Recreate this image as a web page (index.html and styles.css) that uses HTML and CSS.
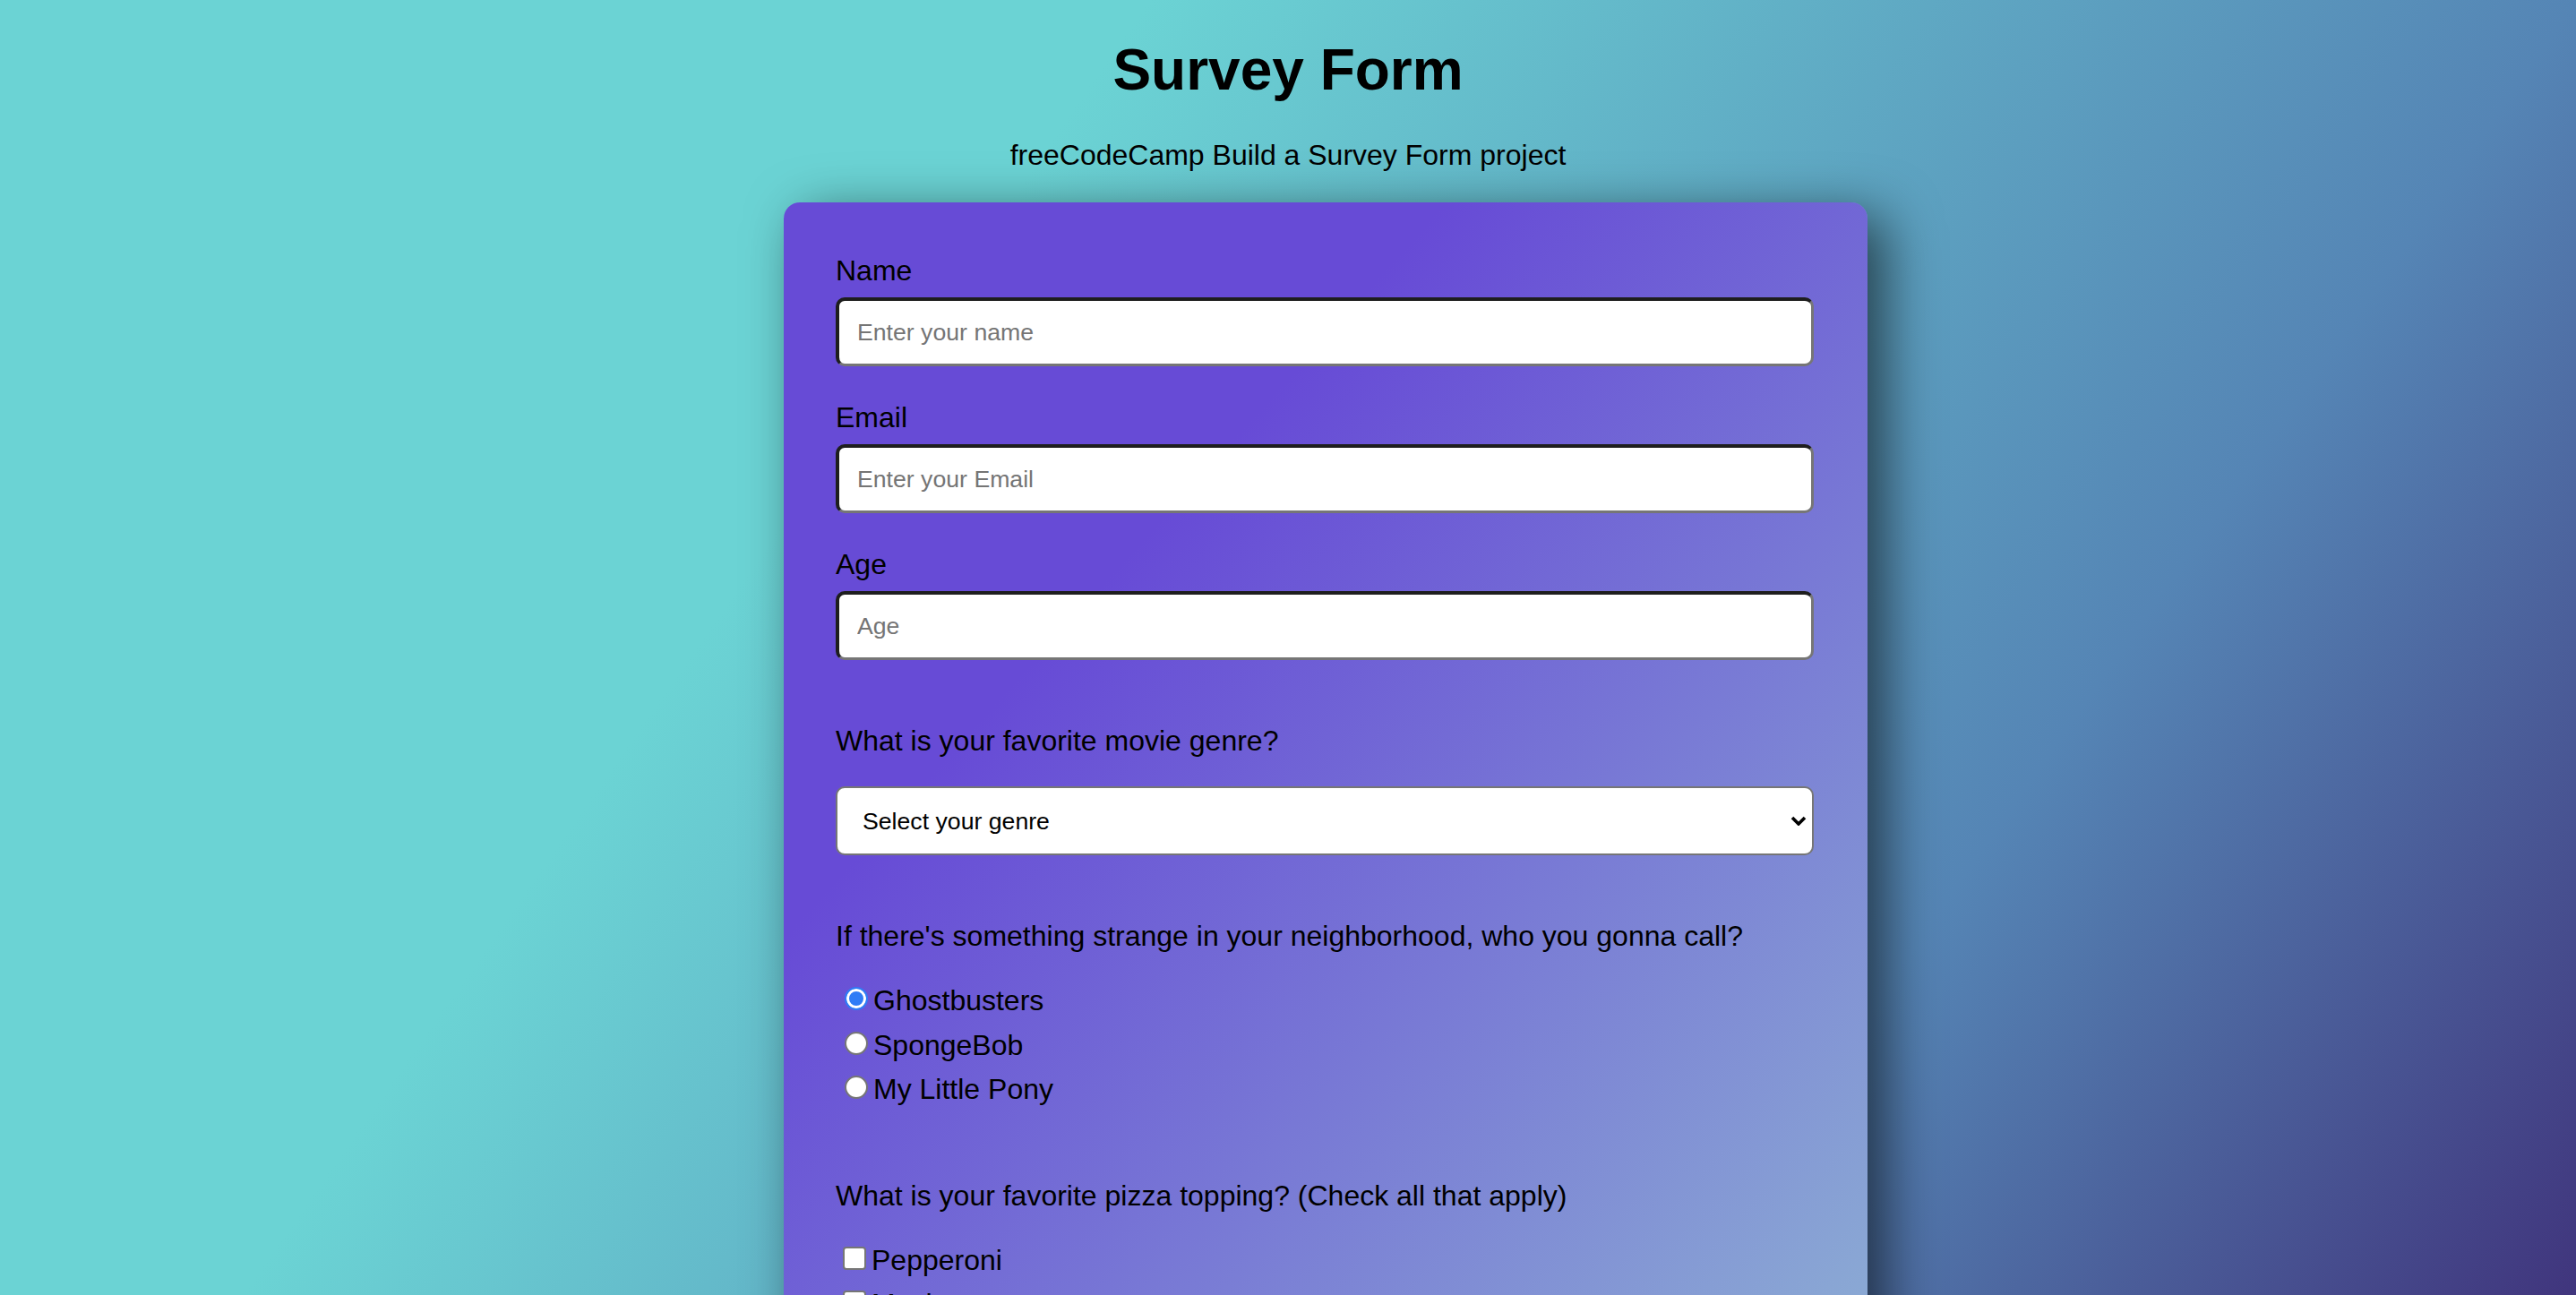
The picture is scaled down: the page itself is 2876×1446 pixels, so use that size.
FILE: index.html
```html
<!DOCTYPE html>
<html lang="en">
<head>
<meta charset="utf-8">
<title>Survey Form</title>
<link rel="stylesheet" href="styles.css">
</head>
<body>
<header class="page-header">
  <h1 id="title" class="title">Survey Form</h1>
  <p id="description" class="description">freeCodeCamp Build a Survey Form project</p>
</header>
<form id="survey-form" class="card">
  <div class="field">
    <label class="field-label" id="name-label" for="name">Name</label>
    <input class="text-input" id="name" type="text" placeholder="Enter your name">
  </div>
  <div class="field">
    <label class="field-label" id="email-label" for="email">Email</label>
    <input class="text-input" id="email" type="email" placeholder="Enter your Email">
  </div>
  <div class="field">
    <label class="field-label" id="number-label" for="number">Age</label>
    <input class="text-input" id="number" type="number" placeholder="Age">
  </div>
  <div class="field">
    <p class="question">What is your favorite movie genre?</p>
    <div class="select-wrap">
      <select class="select" id="dropdown">
        <option>Select your genre</option>
        <option>Action</option>
        <option>Comedy</option>
        <option>Drama</option>
        <option>Horror</option>
      </select>
      <svg class="chevron" width="18" height="11" viewBox="0 0 18 11" aria-hidden="true">
        <polyline points="2,2 9,9 16,2" fill="none" stroke="#000" stroke-width="3.6" stroke-linejoin="miter"/>
      </svg>
    </div>
  </div>
  <div class="field">
    <p class="question">If there's something strange in your neighborhood, who you gonna call?</p>
    <div class="options">
      <label class="option"><input class="radio" type="radio" name="call" value="ghostbusters" checked>Ghostbusters</label>
      <label class="option"><input class="radio" type="radio" name="call" value="spongebob">SpongeBob</label>
      <label class="option"><input class="radio" type="radio" name="call" value="pony">My Little Pony</label>
    </div>
  </div>
  <div class="field">
    <p class="question">What is your favorite pizza topping? (Check all that apply)</p>
    <div class="options">
      <label class="option"><input class="checkbox" type="checkbox" value="pepperoni">Pepperoni</label>
      <label class="option"><input class="checkbox" type="checkbox" value="mushrooms">Mushrooms</label>
      <label class="option"><input class="checkbox" type="checkbox" value="onions">Onions</label>
      <label class="option"><input class="checkbox" type="checkbox" value="sausage">Sausage</label>
    </div>
  </div>
  <div class="field">
    <p class="question">Any comments or suggestions?</p>
    <textarea class="comments" placeholder="Enter your comments here..."></textarea>
  </div>
  <div class="field">
    <button class="submit" id="submit" type="submit">Submit</button>
  </div>
</form>
</body>
</html>
```
FILE: styles.css
```css
html, body {
  margin: 0;
  padding: 0;
}

body {
  min-height: 100vh;
  font-family: "Liberation Sans", Arial, Helvetica, sans-serif;
  color: #000;
  background: linear-gradient(125deg, #6bd3d4 0%, #6bd3d4 33%, #5585b5 74%, #40357d 100%) fixed;
  padding-bottom: 80px;
}

.page-header {
  text-align: center;
}

.title {
  margin: 41px 0 0;
  font-size: 64px;
  line-height: 74px;
  font-weight: bold;
}

.description {
  margin: 40px 0 34px;
  font-size: 32px;
  line-height: 37px;
}

.card {
  width: 1210px;
  box-sizing: border-box;
  margin: 0 0 0 calc(50% - 563px);
  padding: 58px 60px 60px 58px;
  border-radius: 18px;
  background: linear-gradient(132deg, #674bd6 0px, #674bd6 550px, #8aa8d4 1710px, #a6d4d8 2400px);
  box-shadow: 20px 15px 60px rgba(0, 0, 0, 0.6);
}

.field {
  display: flow-root;
  margin-bottom: 39px;
}

.field-label {
  display: block;
  font-size: 32px;
  line-height: 37px;
  margin-bottom: 11px;
}

.text-input {
  display: block;
  width: 100%;
  height: 77px;
  box-sizing: border-box;
  margin: 0;
  padding: 0 20px;
  font-family: "Liberation Sans", Arial, Helvetica, sans-serif;
  font-size: 26.67px;
  color: #000;
  background: #fff;
  border-style: solid;
  border-width: 4px 3px 3px 4px;
  border-color: #1e1e1e #767676 #767676 #1e1e1e;
  border-radius: 10px;
  outline: none;
}

.text-input::placeholder,
.comments::placeholder {
  color: #757575;
}

.question {
  margin: 33px 0 32px;
  font-size: 32px;
  line-height: 37px;
}

.select-wrap {
  position: relative;
}

.select {
  display: block;
  width: 100%;
  height: 77px;
  box-sizing: border-box;
  margin: 0;
  padding: 0 60px 0 28px;
  appearance: none;
  -webkit-appearance: none;
  font-family: "Liberation Sans", Arial, Helvetica, sans-serif;
  font-size: 26.67px;
  color: #000;
  background: #fff;
  border: 2px solid #767676;
  border-radius: 10px;
}

.chevron {
  position: absolute;
  right: 8px;
  top: 33px;
  pointer-events: none;
}

.option {
  display: block;
  font-size: 32px;
  line-height: 37px;
  margin-bottom: 9.5px;
}

.radio {
  appearance: none;
  -webkit-appearance: none;
  width: 26px;
  height: 26px;
  box-sizing: border-box;
  margin: 6px 6px 0 10px;
  border: 2px solid #767676;
  border-radius: 50%;
  background: #fff;
  vertical-align: baseline;
}

.radio:checked {
  border-color: #2f7cf6;
  background: #2f7cf6;
  box-shadow: inset 0 0 0 3px #fff;
}

.checkbox {
  appearance: none;
  -webkit-appearance: none;
  width: 26px;
  height: 26px;
  box-sizing: border-box;
  margin: 6px 6px 0 8px;
  border: 2px solid #767676;
  border-radius: 4px;
  background: #fff;
  vertical-align: baseline;
}

.comments {
  display: block;
  width: 100%;
  height: 200px;
  box-sizing: border-box;
  padding: 16px;
  font-family: "Liberation Sans", Arial, Helvetica, sans-serif;
  font-size: 26.67px;
  border: 2px solid #767676;
  border-radius: 10px;
  resize: vertical;
}

.submit {
  display: block;
  width: 100%;
  height: 77px;
  font-family: "Liberation Sans", Arial, Helvetica, sans-serif;
  font-size: 32px;
  color: #fff;
  background: #3b3b8f;
  border: none;
  border-radius: 10px;
}
```
